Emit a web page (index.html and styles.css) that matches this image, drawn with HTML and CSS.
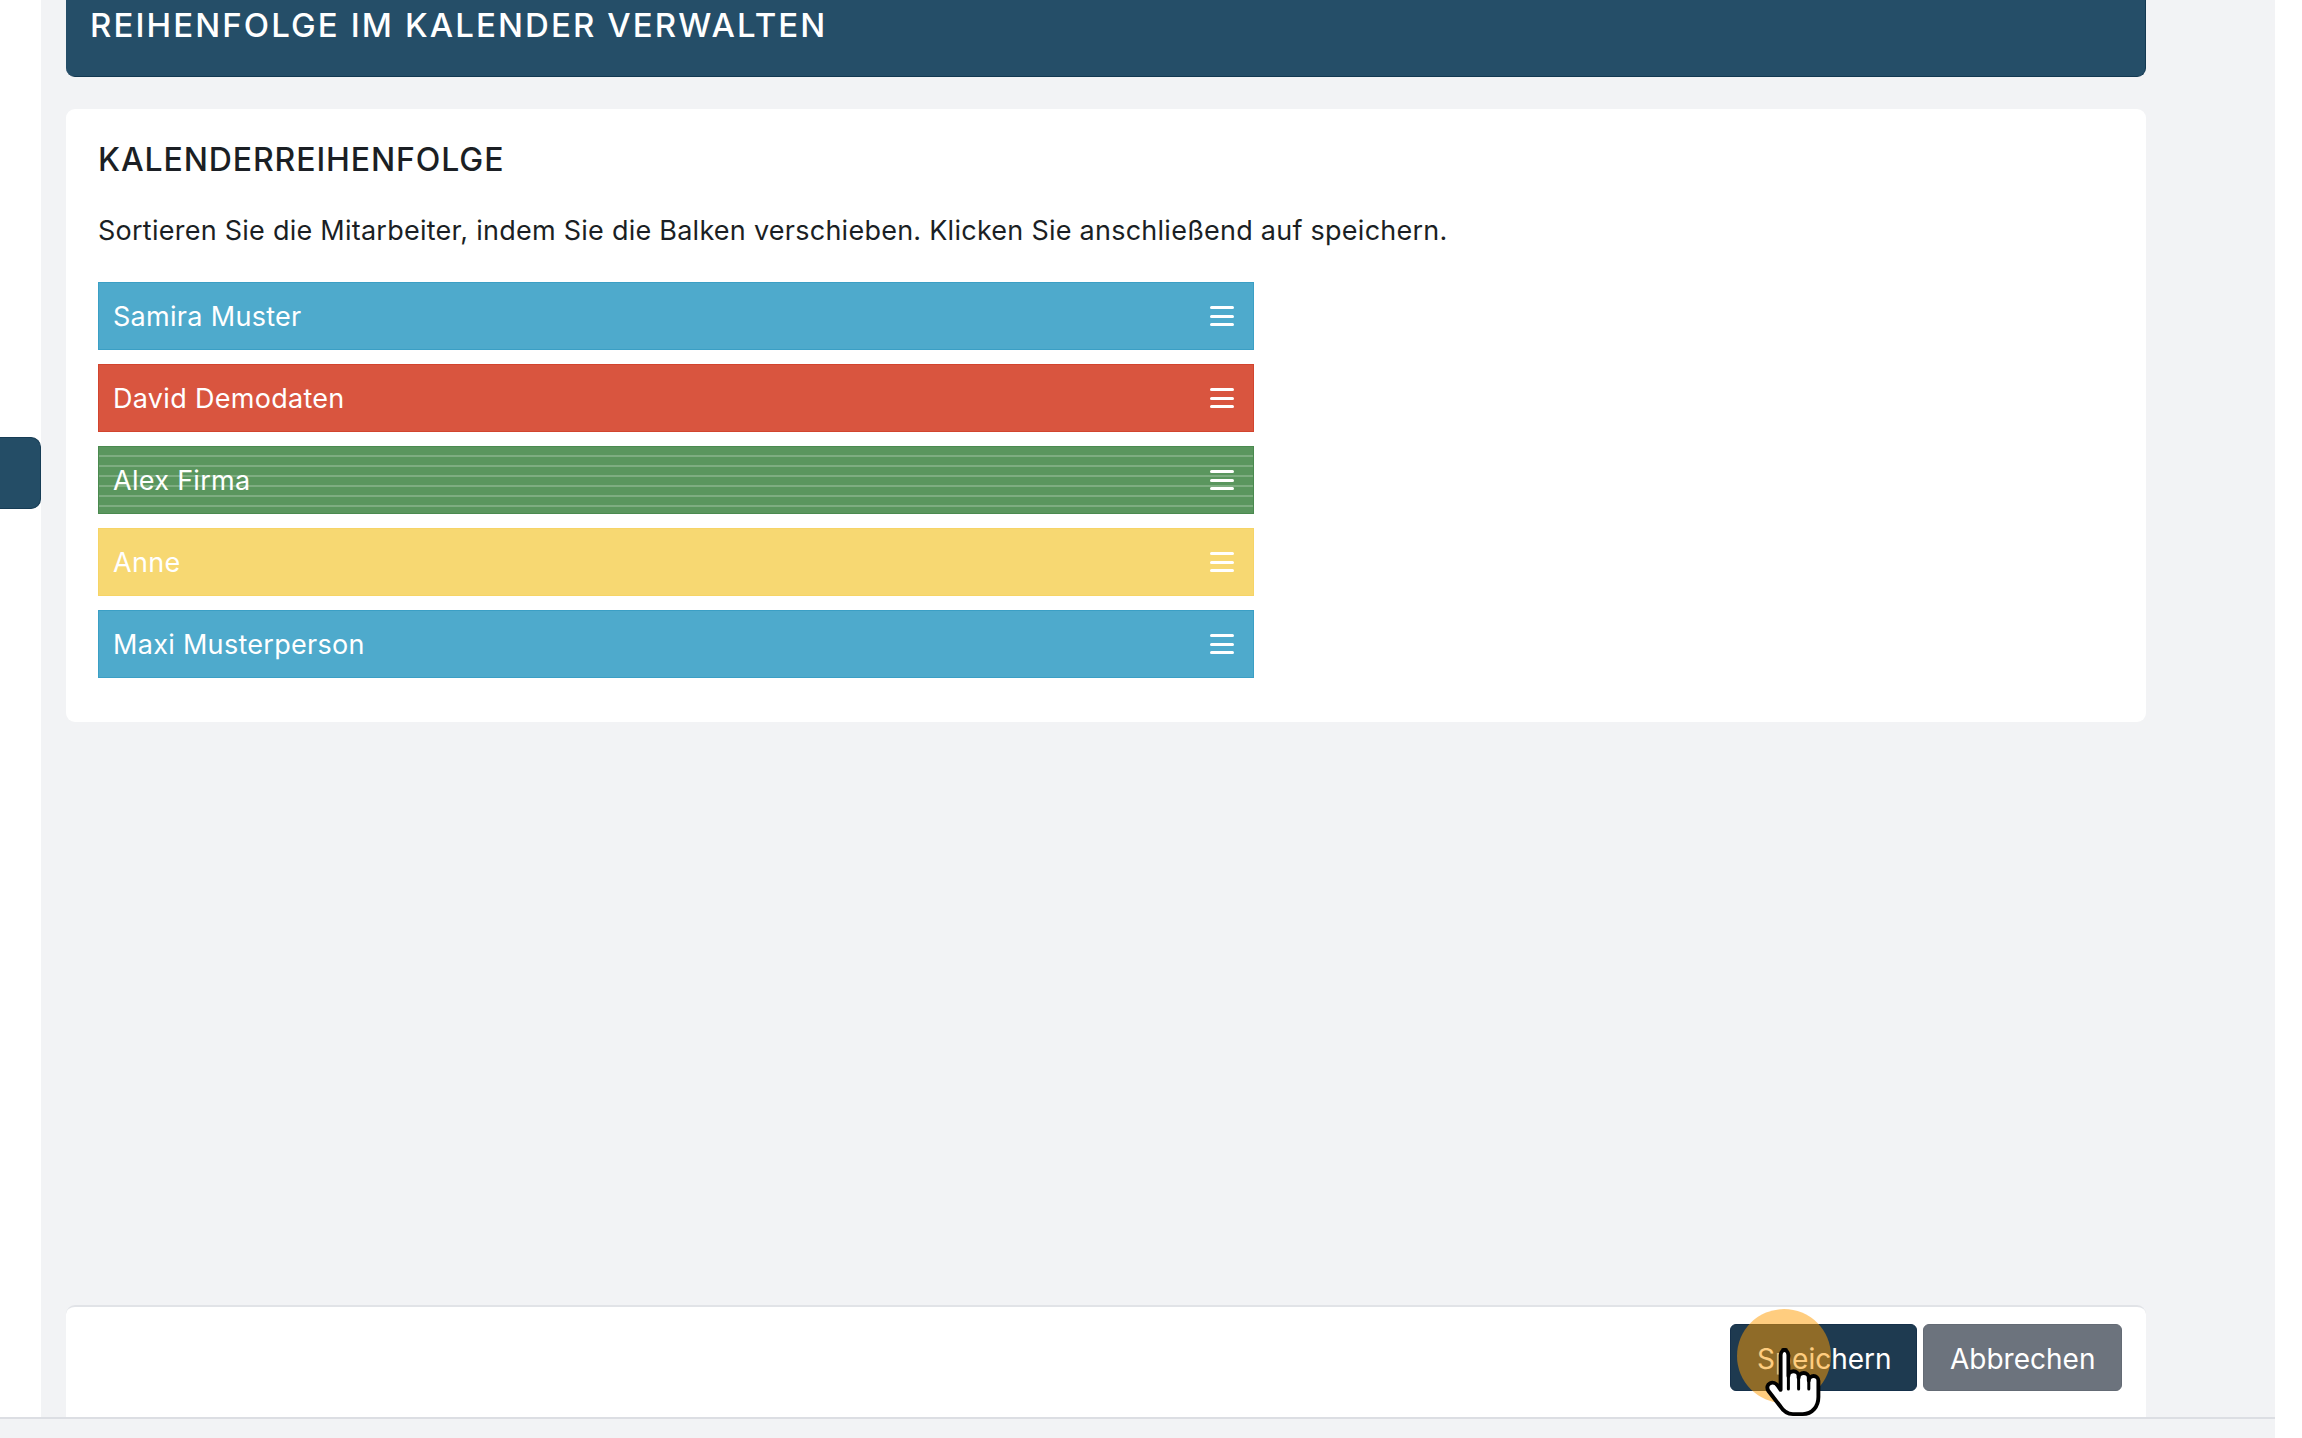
FILE: index.html
```html
<!DOCTYPE html>
<html lang="de">
<head>
<meta charset="utf-8">
<title>Reihenfolge im Kalender verwalten</title>
<link rel="stylesheet" href="styles.css">
</head>
<body>
<div class="screen">
  <div class="frame">
    <div class="app">
      <aside class="sidebar">
        <div class="sidebar-tab"></div>
      </aside>
      <main class="main">
        <header class="page-header">
          <h1 class="page-title">REIHENFOLGE IM KALENDER VERWALTEN</h1>
        </header>

        <section class="card">
          <h2 class="card-title">KALENDERREIHENFOLGE</h2>
          <p class="card-text">Sortieren Sie die Mitarbeiter, indem Sie die Balken verschieben. Klicken Sie anschließend auf speichern.</p>
          <ul class="order-list">
            <li class="order-item blue"><span>Samira Muster</span><span class="handle"><i></i><i></i><i></i></span></li>
            <li class="order-item red"><span>David Demodaten</span><span class="handle"><i></i><i></i><i></i></span></li>
            <li class="order-item green"><span>Alex Firma</span><span class="handle"><i></i><i></i><i></i></span></li>
            <li class="order-item yellow"><span>Anne</span><span class="handle"><i></i><i></i><i></i></span></li>
            <li class="order-item blue"><span>Maxi Musterperson</span><span class="handle"><i></i><i></i><i></i></span></li>
          </ul>
        </section>

        <footer class="action-bar">
          <button class="btn btn-primary">Speichern</button>
          <button class="btn btn-secondary">Abbrechen</button>
        </footer>
      </main>
    </div>
    <div class="hscroll"></div>
  </div>
  <div class="vstrip"></div>
</div>

<!-- click highlight and pointer -->
<div class="click-ring"></div>
<svg class="pointer" width="60" height="72" viewBox="0 0 20 24" aria-hidden="true">
  <path d="M7 1.3c1 0 1.8.8 1.8 1.8V10c0-1 .8-1.6 1.7-1.6s1.7.7 1.7 1.6v.6c0-1 .8-1.6 1.7-1.6s1.7.7 1.7 1.6v.9c0-.9.8-1.5 1.6-1.5s1.6.7 1.6 1.6V17c0 3.2-2.1 5.7-5.2 5.7h-3.3c-1.9 0-3.2-1-4.2-2.6L2.1 14.9c-.6-1-.3-2.1.6-2.5s2 0 2.6.9l.9 1.3V3.1c0-1 .8-1.8 1.8-1.8z" fill="#fff" stroke="#000" stroke-width="1.3" stroke-linejoin="round"/>
  <path d="M8.8 10v4.3M12.2 10.6v3.7M15.6 11.5v2.8" stroke="#000" stroke-width="1" stroke-linecap="round"/>
</svg>
</body>
</html>
```

FILE: styles.css
```css
html, body {
  margin: 0;
  padding: 0;
}

body {
  background: #ffffff;
  font-family: "Inter", "Liberation Sans", sans-serif;
  color: #212529;
  width: 2302px;
  height: 1438px;
  overflow: hidden;
}

.screen {
  display: flex;
  height: 1438px;
}

.frame {
  width: 2275px;
  display: flex;
  flex-direction: column;
}

.vstrip {
  flex: 1;
  background: #ffffff;
}

.app {
  flex: 1;
  display: flex;
  min-height: 0;
}

/* left navigation rail */
.sidebar {
  width: 41px;
  background: #ffffff;
  padding-top: 437px;
  box-sizing: border-box;
}

.sidebar-tab {
  width: 41px;
  height: 72px;
  background: #244d66;
  border: 1px solid #163c55;
  border-left: 0;
  border-radius: 0 10px 10px 0;
  box-sizing: border-box;
}

.main {
  flex: 1;
  background: #f2f3f5;
  padding: 0 129px 0 25px;
  display: flex;
  flex-direction: column;
  overflow: hidden;
}

/* page header */
.page-header {
  height: 77px;
  background: #254e68;
  border-bottom: 1px solid #123851;
  border-right: 1px solid #123851;
  border-radius: 0 0 9px 9px;
  box-sizing: border-box;
  padding: 0 24px;
}

.page-title {
  margin: 0;
  color: #ffffff;
  font-weight: 500;
  font-size: 33px;
  line-height: 50px;
  letter-spacing: 2.1px;
}

/* sorting card */
.card {
  margin-top: 32px;
  background: #ffffff;
  border-radius: 9px;
  padding: 27px 32px 44px;
}

.card-title {
  margin: 0;
  font-weight: 500;
  font-size: 32px;
  line-height: 48px;
  letter-spacing: 0.9px;
  color: #1b1f24;
}

.card-text {
  margin: 25px 0 0;
  font-size: 27px;
  line-height: 44px;
  color: #1b1f24;
  letter-spacing: 0.25px;
}

.order-list {
  list-style: none;
  margin: 29px 0 0;
  padding: 0;
  width: 1156px;
  display: flex;
  flex-direction: column;
  gap: 14px;
}

.order-item {
  height: 68px;
  box-sizing: border-box;
  border: 1px solid transparent;
  display: flex;
  align-items: center;
  justify-content: space-between;
  padding: 0 19px 0 14px;
  color: #ffffff;
  font-size: 27px;
  letter-spacing: 0.3px;
}

.order-item.blue {
  background: #4eaacc;
  border-color: #3b9fc5;
}

.order-item.red {
  background: #d9553f;
  border-color: #d2442e;
}

.order-item.green {
  background-color: #5a965e;
  border-color: #4a8a4f;
  background-image: repeating-linear-gradient(
    to bottom,
    transparent 0,
    transparent 8px,
    rgba(255, 255, 255, 0.22) 8px,
    rgba(255, 255, 255, 0.22) 10px
  );
}

.order-item.yellow {
  background: #f7d872;
  border-color: #f6d466;
}

/* drag handle (three bars) */
.handle {
  display: flex;
  flex-direction: column;
  gap: 5.5px;
  width: 24px;
}

.handle i {
  display: block;
  height: 3px;
  border-radius: 2px;
  background: #ffffff;
}

/* bottom action bar */
.action-bar {
  margin-top: auto;
  height: 112px;
  background: #ffffff;
  border-top: 2px solid #e1e3e7;
  border-radius: 9px 9px 0 0;
  box-sizing: border-box;
  display: flex;
  justify-content: flex-end;
  align-items: flex-start;
  gap: 6px;
  padding: 17px 24px 0 0;
}

.btn {
  height: 67px;
  border: 1px solid transparent;
  border-radius: 6px;
  font-family: inherit;
  font-size: 28px;
  color: #ffffff;
  padding: 2px 26px 0;
  cursor: pointer;
}

.btn-primary {
  background: #1e3a50;
  border-color: #15304a;
  width: 187px;
}

.btn-secondary {
  background: #6c737d;
  border-color: #646b75;
  width: 199px;
}

.hscroll {
  height: 21px;
  background: #f2f3f5;
  border-top: 2px solid #dcdee3;
  box-sizing: border-box;
}

/* click highlight over the save button */
.click-ring {
  position: absolute;
  left: 1737px;
  top: 1309px;
  width: 94px;
  height: 94px;
  border-radius: 50%;
  background: rgba(255, 155, 0, 0.5);
}

.pointer {
  position: absolute;
  left: 1762px;
  top: 1346px;
}
```
